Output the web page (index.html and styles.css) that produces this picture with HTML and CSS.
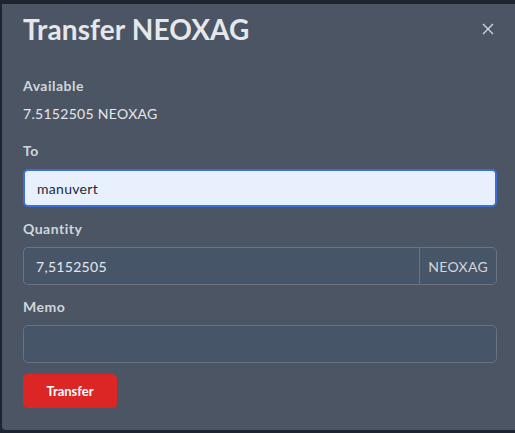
FILE: index.html
```html
<!DOCTYPE html>
<html lang="en">
<head>
  <meta charset="UTF-8" />
  <meta name="viewport" content="width=device-width, initial-scale=1.0"/>
  <title>Transfer NEOXAG</title>
  <link rel="stylesheet" href="styles.css">
</head>
<body>
  <div class="modal">
    <div class="modal-header">
      <h1>Transfer NEOXAG</h1>
      <button class="close" aria-label="Close">
        <svg width="12" height="12" viewBox="0 0 12 12"><path d="M1 1L11 11M11 1L1 11" stroke="#d1d5db" stroke-width="1.4" fill="none"/></svg>
      </button>
    </div>

    <div class="field field-info">
      <label>Available</label>
      <div class="value">7.5152505 NEOXAG</div>
    </div>

    <div class="field">
      <label for="to">To</label>
      <input type="text" id="to" class="input input-filled" value="manuvert">
    </div>

    <div class="field">
      <label for="qty">Quantity</label>
      <div class="group">
        <input type="text" id="qty" class="input" value="7,5152505">
        <span class="addon">NEOXAG</span>
      </div>
    </div>

    <div class="field field-last">
      <label for="memo">Memo</label>
      <input type="text" id="memo" class="input">
    </div>

    <button class="btn-transfer">Transfer</button>
  </div>
</body>
</html>
```

FILE: styles.css
```css
body {
  margin: 0;
  padding: 4px 0 0 2px;
  height: 433px;
  box-sizing: border-box;
  background: #1e2530;
  font-family: "Lato", "Noto Sans", sans-serif;
  overflow: hidden;
}
.modal {
  background: #4b5563;
  height: 426px;
  box-sizing: border-box;
  padding: 0 18px 0 21px;
  border-bottom-left-radius: 4px;
}
.modal-header {
  display: flex;
  justify-content: space-between;
  align-items: center;
  height: 50px;
  margin-bottom: 23px;
}
h1 {
  margin: 0;
  font-size: 28px;
  font-weight: 700;
  color: #e5e7eb;
  letter-spacing: 0.1px;
}
.close {
  background: none;
  border: none;
  padding: 0;
  width: 12px;
  height: 12px;
  margin-right: 3px;
  cursor: pointer;
}
.close svg {
  display: block;
}
.field {
  margin-bottom: 13px;
}
.field-info {
  margin-bottom: 20px;
}
.field-last {
  margin-bottom: 11px;
}
label {
  display: block;
  font-size: 14px;
  font-weight: 700;
  letter-spacing: 0.5px;
  color: #d1d5db;
  margin-bottom: 10px;
}
.field-info label {
  margin-bottom: 11px;
}
.value {
  font-size: 14px;
  letter-spacing: 0.3px;
  color: #e5e7eb;
}
.input {
  display: block;
  width: 100%;
  height: 38px;
  box-sizing: border-box;
  padding: 0 12px;
  font-family: inherit;
  font-size: 14px;
  letter-spacing: 0.3px;
  color: #e5e7eb;
  background: #475569;
  border: 1px solid #6b7280;
  border-radius: 5px;
  outline: none;
}
.input-filled {
  background: #e8f0fe;
  color: #1f2937;
  border: 2px solid #3b6fd8;
  text-decoration: underline wavy #e11d48 1px;
  text-underline-offset: 3px;
}
.group {
  display: flex;
}
.group .input {
  flex: 1;
  border-right: none;
  border-radius: 5px 0 0 5px;
}
.addon {
  display: flex;
  align-items: center;
  padding: 0 8px;
  height: 38px;
  box-sizing: border-box;
  font-size: 14px;
  letter-spacing: 0.3px;
  color: #d1d5db;
  background: #475569;
  border: 1px solid #6b7280;
  border-radius: 0 5px 5px 0;
}
.btn-transfer {
  display: block;
  width: 94px;
  height: 34px;
  background: #dc2626;
  color: #fff;
  border: none;
  border-radius: 5px;
  font-family: inherit;
  font-size: 13px;
  font-weight: 700;
  cursor: pointer;
}
```
